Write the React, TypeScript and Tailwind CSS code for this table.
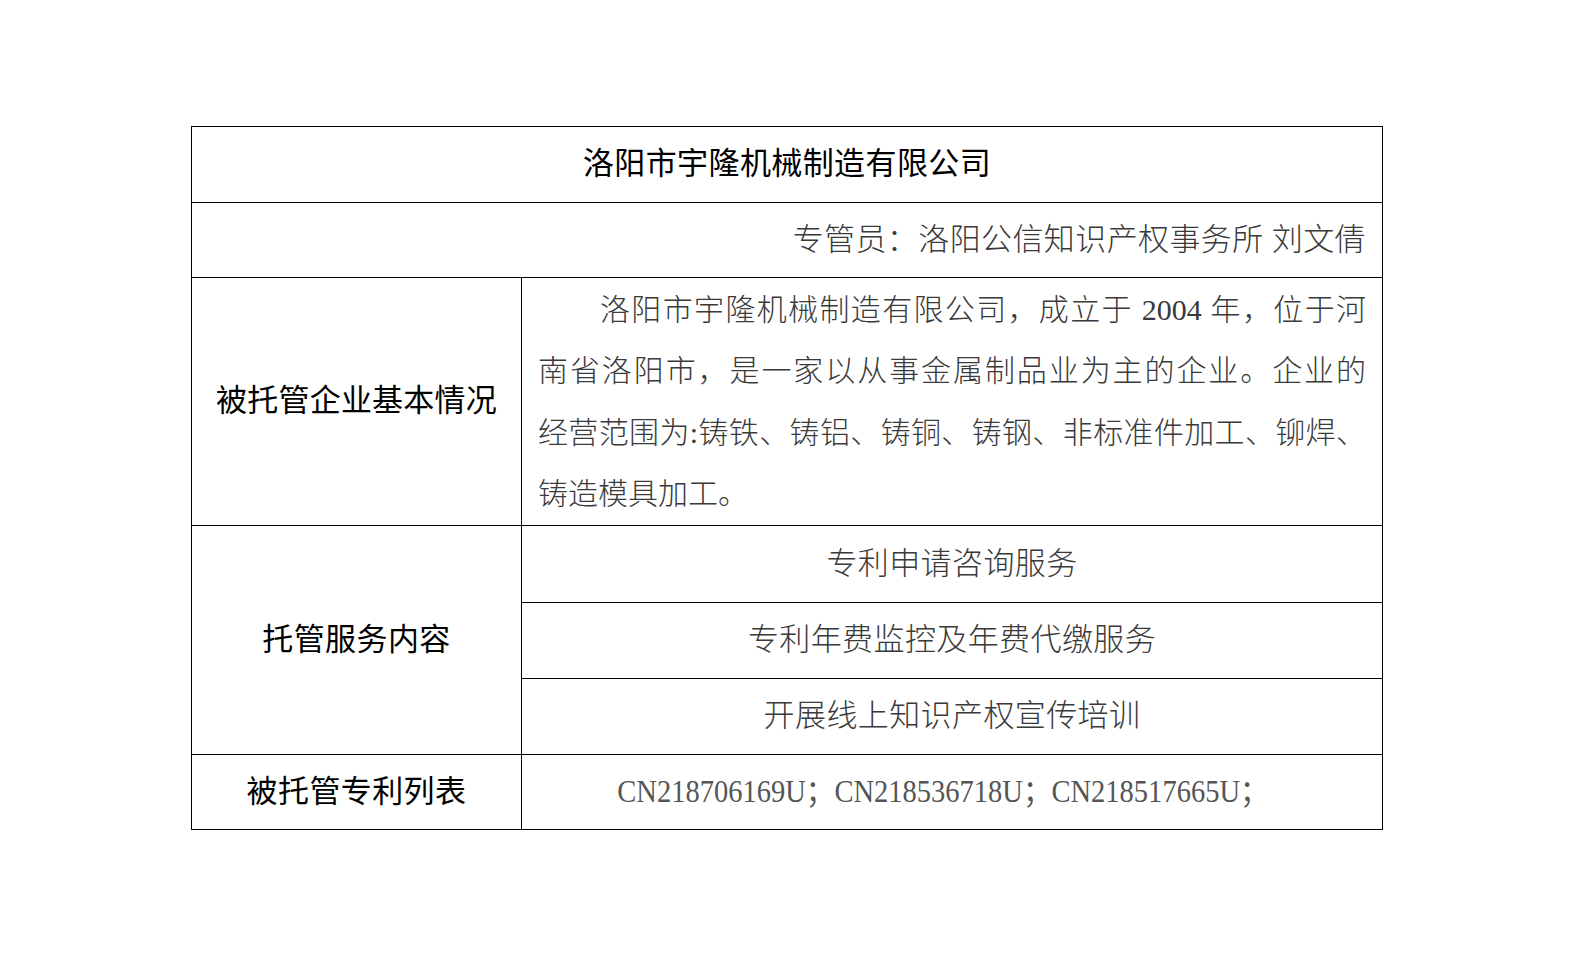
import React from "react";

const cjk = "font-['Liberation_Serif','Noto_Sans_CJK_SC',serif]";

const services = [
  "专利申请咨询服务",
  "专利年费监控及年费代缴服务",
  "开展线上知识产权宣传培训",
];

const introLines = [
  "洛阳市宇隆机械制造有限公司，成立于 2004 年，位于河",
  "南省洛阳市，是一家以从事金属制品业为主的企业。企业的",
  "经营范围为:铸铁、铸铝、铸铜、铸钢、非标准件加工、铆焊、",
];

export default function App() {
  return (
    <div className={`min-h-[970px] w-full bg-white pt-[126px] pl-[191px] ${cjk}`}>
      <table className="w-[1192px] border-collapse border border-black text-[#111]">
        <tbody>
          <tr className="h-[76px]">
            <td
              colSpan={2}
              className="border border-black text-center text-[31px] font-normal tracking-[0.4px] text-black"
            >
              洛阳市宇隆机械制造有限公司
            </td>
          </tr>
          <tr className="h-[75px]">
            <td
              colSpan={2}
              className="border border-black pr-[16px] text-right text-[31px] font-light tracking-[0.4px] text-[#3a3a3a]"
            >
              专管员：洛阳公信知识产权事务所 刘文倩
            </td>
          </tr>
          <tr className="h-[248px]">
            <td className="w-[330px] border border-black text-center text-[31px] font-normal tracking-[0.2px] text-black">
              被托管企业基本情况
            </td>
            <td className="border border-black px-[16px] text-[30px] font-light leading-[61.5px] text-[#3a3a3a]">
              {introLines.map((line, i) => (
                <div
                  key={i}
                  className={`text-justify [text-align-last:justify] ${i === 0 ? "pl-[62px]" : ""}`}
                >
                  {line}
                </div>
              ))}
              <div>铸造模具加工。</div>
            </td>
          </tr>
          {services.map((s, i) => (
            <tr key={s} className={i === 0 ? "h-[77px]" : "h-[76px]"}>
              {i === 0 && (
                <td
                  rowSpan={3}
                  className="border border-black text-center text-[31px] font-normal tracking-[0.4px] text-black"
                >
                  托管服务内容
                </td>
              )}
              <td className="border border-black text-center text-[31px] font-light tracking-[0.4px] text-[#3a3a3a]">
                {s}
              </td>
            </tr>
          ))}
          <tr className="h-[75px]">
            <td className="border border-black text-center text-[31px] font-normal tracking-[0.4px] text-black">
              被托管专利列表
            </td>
            <td className="border border-black pr-[18px] text-center text-[31px] text-[#555]">
              <span className="inline-block origin-center scale-x-[0.92]">
                CN218706169U；CN218536718U；CN218517665U；
              </span>
            </td>
          </tr>
        </tbody>
      </table>
    </div>
  );
}
